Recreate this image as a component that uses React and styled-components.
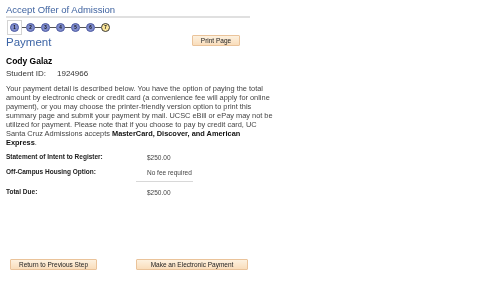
import styled, { createGlobalStyle } from 'styled-components';

const GlobalStyle = createGlobalStyle`
	html, body {
		margin: 0;
		padding: 0;
		background: #fff;
	}
	body {
		font-family: 'Liberation Sans', Arial, sans-serif;
		color: #333;
	}
`;

const steps = [1, 2, 3, 4, 5, 6, 7];

const rows = [
	{ label: 'Statement of Intent to Register:', value: '$250.00' },
	{ label: 'Off-Campus Housing Option:', value: 'No fee required', rule: true },
	{ label: 'Total Due:', value: '$250.00' },
];

export default function App() {
	return (
		<>
			<GlobalStyle />
			<Page>
				<Title>Accept Offer of Admission</Title>
				<Steps>
					{steps.map((n, i) => (
						<Step key={n} first={i === 0}>
							{i > 0 && <Connector short={i === 1} />}
							<Bubble current={n === 7}>{n}</Bubble>
						</Step>
					))}
				</Steps>
				<HeadRow>
					<Heading>Payment</Heading>
					<Btn>Print Page</Btn>
				</HeadRow>
				<Name>Cody Galaz</Name>
				<IdRow>
					<span>Student ID:</span>
					<span>1924966</span>
				</IdRow>
				<Intro>
					Your payment detail is described below. You have the option of paying the total
					<br />
					amount by electronic check or credit card (a convenience fee will apply for online
					<br />
					payment), or you may choose the printer-friendly version option to print this
					<br />
					summary page and submit your payment by mail. UCSC eBill or ePay may not be
					<br />
					utilized for payment. Please note that if you choose to pay by credit card, UC
					<br />
					Santa Cruz Admissions accepts <b>MasterCard, Discover, and American</b>
					<br />
					<b>Express</b>.
				</Intro>
				<Fees>
					{rows.map((r) => (
						<FeeRow key={r.label} rule={r.rule}>
							<FeeLabel>{r.label}</FeeLabel>
							<FeeValue rule={r.rule}>{r.value}</FeeValue>
						</FeeRow>
					))}
				</Fees>
				<Actions>
					<Btn wide={87}>Return to Previous Step</Btn>
					<Btn wide={112}>Make an Electronic Payment</Btn>
				</Actions>
			</Page>
		</>
	);
}

const Page = styled.div`
	width: 480px;
	height: 284px;
	padding: 5px 0 0 6px;
	box-sizing: border-box;
	display: flex;
	flex-direction: column;
	will-change: transform;
`;

const Title = styled.div`
	width: 244px;
	color: #3f63a0;
	font-size: 9.5px;
	line-height: 10px;
	border-bottom: 2px solid #e0e0e0;
	padding-bottom: 1px;
`;

const Steps = styled.div`
	display: flex;
	align-items: center;
	margin-top: 2px;
	height: 15px;
`;

const Step = styled.div`
	display: flex;
	align-items: center;
	${(p) =>
		p.first &&
		`
		border: 1px solid #d4d4d4;
		padding: 2px;
		margin-left: 1px;
	`}
`;

const Connector = styled.div`
	width: ${(p) => (p.short ? '4px' : '6px')};
	height: 1px;
	background: #555;
`;

const Bubble = styled.div`
	width: 9px;
	height: 9px;
	border-radius: 50%;
	box-sizing: border-box;
	border: 1px solid ${(p) => (p.current ? '#3a3a3a' : '#4d5aa0')};
	background: ${(p) => (p.current ? '#fde79a' : '#7f8ccd')};
	color: #111;
	font-size: 4.5px;
	font-weight: bold;
	display: flex;
	align-items: center;
	justify-content: center;
`;

const HeadRow = styled.div`
	display: flex;
	align-items: flex-start;
	justify-content: space-between;
	width: 234px;
	margin-top: 1px;
`;

const Heading = styled.h1`
	margin: 0;
	font-weight: normal;
	font-size: 11.5px;
	line-height: 12px;
	color: #3d65a6;
`;

const Btn = styled.button`
	font-family: 'Liberation Sans', Arial, sans-serif;
	font-size: 6.5px;
	color: #222;
	height: 11px;
	width: ${(p) => (p.wide ? `${p.wide}px` : '48px')};
	padding: 0;
	margin-top: -1px;
	border: 1px solid #eac39a;
	border-radius: 1px;
	background: linear-gradient(#fdf1df, #f9ddbb);
	cursor: pointer;
`;

const Name = styled.div`
	margin-top: 8px;
	font-size: 8.5px;
	font-weight: bold;
	color: #000;
	line-height: 10px;
`;

const IdRow = styled.div`
	display: flex;
	font-size: 8px;
	line-height: 10px;
	margin-top: 3px;
	color: #333;
	white-space: nowrap;
	span:first-child {
		width: 51px;
	}
`;

const Intro = styled.p`
	margin: 5px 0 0;
	font-size: 7.4px;
	line-height: 9px;
	color: #444;
	white-space: nowrap;
	b {
		color: #111;
	}
`;

const Fees = styled.div`
	margin-top: 6px;
	display: flex;
	flex-direction: column;
`;

const FeeRow = styled.div`
	display: flex;
	align-items: flex-start;
	height: ${(p) => (p.rule ? '20px' : '15px')};
`;

const FeeLabel = styled.div`
	width: 141px;
	font-size: 6.5px;
	font-weight: bold;
	color: #222;
	line-height: 8px;
`;

const FeeValue = styled.div`
	font-size: 6.5px;
	color: #444;
	line-height: 8px;
	padding-top: 1px;
	${(p) =>
		p.rule &&
		`
		position: relative;
		&::after {
			content: '';
			position: absolute;
			left: -11px;
			top: 13px;
			width: 57px;
			height: 1px;
			background: #d8d8d8;
		}
	`}
`;

const Actions = styled.div`
	margin-top: auto;
	margin-bottom: 14px;
	display: flex;
	gap: 39px;
	padding-left: 4px;
`;
